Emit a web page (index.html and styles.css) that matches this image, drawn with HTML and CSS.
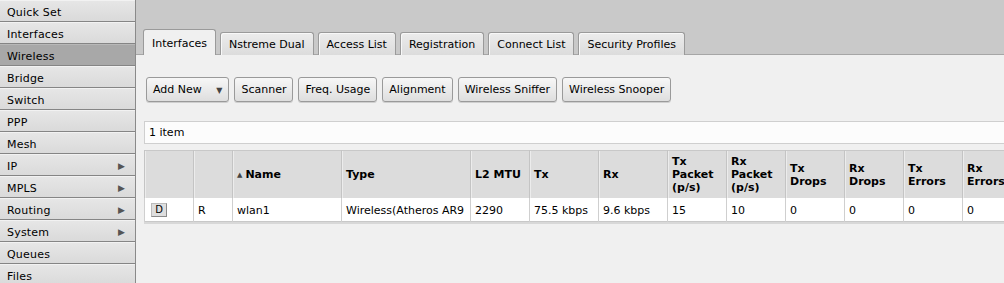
FILE: index.html
```html
<!DOCTYPE html>
<html lang="en">
<head>
    <meta charset="UTF-8">
    <title>WebFig - Wireless</title>
    <link rel="stylesheet" href="styles.css">
</head>
<body>
    <div class="sidebar">
        <div class="menu-item">Quick Set</div>
        <div class="menu-item">Interfaces</div>
        <div class="menu-item active">Wireless</div>
        <div class="menu-item">Bridge</div>
        <div class="menu-item">Switch</div>
        <div class="menu-item">PPP</div>
        <div class="menu-item">Mesh</div>
        <div class="menu-item">IP <span class="arrow">&#9654;</span></div>
        <div class="menu-item">MPLS <span class="arrow">&#9654;</span></div>
        <div class="menu-item">Routing <span class="arrow">&#9654;</span></div>
        <div class="menu-item">System <span class="arrow">&#9654;</span></div>
        <div class="menu-item">Queues</div>
        <div class="menu-item">Files</div>
    </div>

    <div class="main">
        <div class="tab-strip">
            <div class="tab active">Interfaces</div>
            <div class="tab">Nstreme Dual</div>
            <div class="tab">Access List</div>
            <div class="tab">Registration</div>
            <div class="tab">Connect List</div>
            <div class="tab">Security Profiles</div>
        </div>

        <div class="content">
            <div class="toolbar">
                <button class="btn">Add New <span class="caret">&#9660;</span></button>
                <button class="btn">Scanner</button>
                <button class="btn">Freq. Usage</button>
                <button class="btn">Alignment</button>
                <button class="btn">Wireless Sniffer</button>
                <button class="btn">Wireless Snooper</button>
            </div>

            <div class="item-count">1 item</div>

            <table class="grid">
                <colgroup>
                    <col style="width:49px">
                    <col style="width:39px">
                    <col style="width:109px">
                    <col style="width:129px">
                    <col style="width:59px">
                    <col style="width:69px">
                    <col style="width:69px">
                    <col style="width:59px">
                    <col style="width:59px">
                    <col style="width:59px">
                    <col style="width:59px">
                    <col style="width:59px">
                    <col style="width:59px">
                </colgroup>
                <thead>
                    <tr>
                        <th></th>
                        <th></th>
                        <th><span class="sort">&#9650;</span>Name</th>
                        <th>Type</th>
                        <th>L2 MTU</th>
                        <th>Tx</th>
                        <th>Rx</th>
                        <th>Tx Packet (p/s)</th>
                        <th>Rx Packet (p/s)</th>
                        <th>Tx Drops</th>
                        <th>Rx Drops</th>
                        <th>Tx Errors</th>
                        <th>Rx Errors</th>
                    </tr>
                </thead>
                <tbody>
                    <tr>
                        <td><span class="flag-btn">D</span></td>
                        <td>R</td>
                        <td>wlan1</td>
                        <td>Wireless(Atheros AR9</td>
                        <td>2290</td>
                        <td>75.5 kbps</td>
                        <td>9.6 kbps</td>
                        <td>15</td>
                        <td>10</td>
                        <td>0</td>
                        <td>0</td>
                        <td>0</td>
                        <td>0</td>
                    </tr>
                </tbody>
            </table>
        </div>
    </div>
</body>
</html>
```

FILE: styles.css
```css
/* base */
html, body {
    margin: 0;
    height: 100%;
}

body {
    display: flex;
    overflow: hidden;
    font-family: "DejaVu Sans", Verdana, sans-serif;
    font-size: 11px;
    color: #000;
    background-color: #f0f0f0;
}

/* left menu */
.sidebar {
    width: 135px;
    flex-shrink: 0;
    border-right: 1px solid #8a8a8a;
    background-color: #dcdcdc;
    letter-spacing: 0.2px;
}

.menu-item {
    height: 17px;
    line-height: 17px;
    padding: 3px 7px 0;
    display: flex;
    justify-content: space-between;
    align-items: center;
    background: linear-gradient(#e6e6e6, #dadada);
    border-top: 1px solid #f2f2f2;
    border-bottom: 1px solid #858585;
}

.menu-item.active {
    background: #a8a8a8;
    border-top-color: #b8b8b8;
}

.menu-item .arrow {
    font-size: 9px;
    color: #555;
    margin-right: 3px;
}

/* right side */
.main {
    flex: 1;
    min-width: 0;
    display: flex;
    flex-direction: column;
}

.tab-strip {
    height: 55px;
    box-sizing: border-box;
    background-color: #c9c9c9;
    border-bottom: 1px solid #a6a6a6;
    padding-left: 7px;
    display: flex;
    align-items: flex-end;
    gap: 4px;
}

.tab {
    height: 22px;
    line-height: 24px;
    padding: 0 8px;
    margin-bottom: -1px;
    border: 1px solid #9a9a9a;
    border-bottom: none;
    border-radius: 3px 3px 0 0;
    background: linear-gradient(#ececec, #dcdcdc);
    box-shadow: inset 1px 1px 0 #f8f8f8;
}

.tab.active {
    height: 25px;
    line-height: 28px;
    background: #f0f0f0;
    box-shadow: none;
}

.content {
    padding: 22px 0 0 8px;
}

.toolbar {
    display: flex;
    gap: 5px;
    padding-left: 2px;
}

.btn {
    height: 25px;
    padding: 0 6px;
    font-family: inherit;
    font-size: 11px;
    color: #000;
    border: 1px solid #9a9a9a;
    border-radius: 3px;
    background: linear-gradient(#f7f7f7, #dedede);
    box-shadow: 0 1px 0 #cfcfcf;
}

.btn .caret {
    font-size: 8px;
    color: #444;
    margin-left: 11px;
}

.item-count {
    margin-top: 19px;
    height: 21px;
    line-height: 21px;
    padding-left: 4px;
    background-color: #fcfcfc;
    border: 1px solid #cfcfcf;
    border-right: none;
}

/* table */
.grid {
    margin-top: 6px;
    border-collapse: collapse;
    table-layout: fixed;
    width: 877px;
    background-color: #fff;
    border: 1px solid #c8c8c8;
    box-shadow: 0 2px 0 #d8d8d8;
}

.grid th {
    height: 47px;
    padding: 0 4px;
    text-align: left;
    font-weight: bold;
    line-height: 13px;
    background-color: #dcdcdc;
    border-left: 1px solid #c4c4c4;
    box-shadow: inset 1px 0 0 #ececec;
    word-spacing: 100px;
}

.grid th:nth-child(3),
.grid th:nth-child(5) {
    word-spacing: normal;
}

.grid th .sort {
    font-size: 7px;
    color: #444;
    margin-right: 3px;
    vertical-align: 1px;
}

.grid td {
    height: 22px;
    padding: 1px 4px 0;
    border-left: 1px solid #cfcfcf;
    white-space: nowrap;
    overflow: hidden;
}

.flag-btn {
    display: inline-block;
    width: 14px;
    height: 12px;
    line-height: 12px;
    margin-left: 2px;
    text-align: center;
    font-size: 10px;
    background-color: #dedede;
    border: 1px solid #8a8a8a;
    border-top-color: #bbb;
    border-left-color: #bbb;
}
```
